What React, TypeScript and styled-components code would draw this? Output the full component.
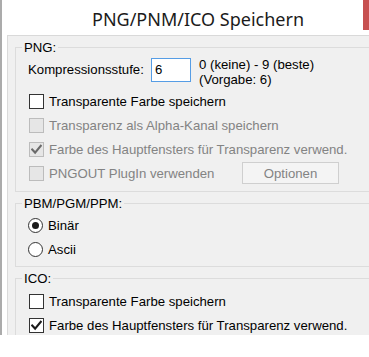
import React from "react";
import styled, { createGlobalStyle } from "styled-components";

const GlobalStyle = createGlobalStyle`
  html, body {
    margin: 0;
    padding: 0;
    background: #ffffff;
  }
  body {
    font-family: "Liberation Sans", Arial, sans-serif;
    font-size: 13.2px;
    color: #000000;
  }
`;

const Page = styled.div`
  width: 369px;
  height: 357px;
  overflow: hidden;
  background: #ffffff;
`;

const Window = styled.div`
  width: 410px;
  height: 335px;
  overflow: hidden;
  box-sizing: border-box;
  border-left: 2px solid #ababab;
  background: #ffffff;
  display: flex;
  flex-direction: column;
`;

const TitleBar = styled.div`
  height: 35px;
  flex-shrink: 0;
  display: flex;
  align-items: flex-start;
`;

const Title = styled.div`
  flex: 1;
  padding: 7px 0 0 90px;
  font-family: "Noto Sans", "Open Sans", sans-serif;
  font-size: 18px;
  line-height: 24px;
  color: #1b1b1b;
`;

const CloseButton = styled.div`
  width: 47px;
  height: 30px;
  background: #c75050;
`;

const Client = styled.div`
  flex: 1;
  margin-left: 5px;
  border-top: 1px solid #d9d9d9;
  border-left: 1px solid #dadada;
  background: #f0f0f0;
  padding: 4px 0 0 7px;
  display: flex;
  flex-direction: column;
  gap: 4px;
`;

const Group = styled.fieldset`
  margin: 0;
  padding: 0;
  min-width: 0;
  border: 1px solid #dcdcdc;
  border-right: none;
`;

const Legend = styled.legend`
  margin-left: 6px;
  padding: 0 2px;
  line-height: 15px;
`;

const GroupBody = styled.div<{ $top: number; $bottom: number }>`
  display: flex;
  flex-direction: column;
  padding: ${(p) => p.$top}px 0 ${(p) => p.$bottom}px 12px;
`;

const CompressionRow = styled.div`
  display: flex;
  align-items: flex-start;
  height: 31px;
`;

const FieldLabel = styled.span`
  width: 123px;
  line-height: 24px;
`;

const NumberBox = styled.div`
  width: 40px;
  height: 24px;
  box-sizing: border-box;
  border: 1px solid #569de5;
  background: #ffffff;
  padding-left: 3px;
  line-height: 22px;
`;

const Hint = styled.div`
  margin-left: 8px;
  margin-top: -1px;
  line-height: 15px;
`;

const Row = styled.div`
  display: flex;
  align-items: center;
  height: 24px;
`;

const Option = styled.label<{ $disabled?: boolean }>`
  display: flex;
  align-items: center;
  gap: 5px;
  line-height: 15px;
  color: ${(p) => (p.$disabled ? "#838383" : "#000000")};
`;

const CheckBox = styled.span<{ $disabled?: boolean }>`
  width: 15px;
  height: 15px;
  margin-left: 1px;
  box-sizing: border-box;
  border: 1px solid ${(p) => (p.$disabled ? "#bcbcbc" : "#333333")};
  background: ${(p) => (p.$disabled ? "#e6e6e6" : "#ffffff")};
  display: flex;
  align-items: center;
  justify-content: center;
`;

const RadioCircle = styled.span`
  width: 15px;
  height: 15px;
  box-sizing: border-box;
  border: 1px solid #333333;
  border-radius: 50%;
  background: #ffffff;
  display: flex;
  align-items: center;
  justify-content: center;
`;

const RadioDot = styled.span`
  width: 7px;
  height: 7px;
  border-radius: 50%;
  background: #1a1a1a;
`;

const PushButton = styled.div<{ $disabled?: boolean }>`
  margin-left: auto;
  margin-right: 28px;
  width: 97px;
  height: 22px;
  box-sizing: border-box;
  border: 1px solid #cfcfcf;
  background: #f4f4f4;
  color: ${(p) => (p.$disabled ? "#838383" : "#000000")};
  display: flex;
  align-items: center;
  justify-content: center;
`;

const ButtonRow = styled(Row)`
  width: 339px;
  box-sizing: border-box;
`;

function CheckMark({ color }: { color: string }) {
  return (
    <svg width="11" height="11" viewBox="0 0 11 11">
      <path d="M1.2 5.6 L4.1 8.6 L9.8 1.8" fill="none" stroke={color} strokeWidth="2.1" strokeLinecap="square" />
    </svg>
  );
}

function Check({ text, checked, disabled }: { text: string; checked?: boolean; disabled?: boolean }) {
  return (
    <Row>
      <Option $disabled={disabled}>
        <CheckBox $disabled={disabled}>{checked && <CheckMark color={disabled ? "#6a6a6a" : "#1a1a1a"} />}</CheckBox>
        {text}
      </Option>
    </Row>
  );
}

function Radio({ text, selected }: { text: string; selected?: boolean }) {
  return (
    <Row>
      <Option>
        <RadioCircle>{selected && <RadioDot />}</RadioCircle>
        {text}
      </Option>
    </Row>
  );
}

export default function App() {
  return (
    <Page>
      <GlobalStyle />
      <Window>
        <TitleBar>
          <Title>PNG/PNM/ICO Speichern</Title>
          <CloseButton />
        </TitleBar>
        <Client>
          <Group>
            <Legend>PNG:</Legend>
            <GroupBody $top={3} $bottom={6}>
              <CompressionRow>
                <FieldLabel>Kompressionsstufe:</FieldLabel>
                <NumberBox>6</NumberBox>
                <Hint>
                  0 (keine) - 9 (beste)
                  <br />
                  (Vorgabe: 6)
                </Hint>
              </CompressionRow>
              <Check text="Transparente Farbe speichern" />
              <Check text="Transparenz als Alpha-Kanal speichern" disabled />
              <Check text="Farbe des Hauptfensters für Transparenz verwend." checked disabled />
              <ButtonRow>
                <Option $disabled>
                  <CheckBox $disabled />
                  PNGOUT PlugIn verwenden
                </Option>
                <PushButton $disabled>Optionen</PushButton>
              </ButtonRow>
            </GroupBody>
          </Group>
          <Group>
            <Legend>PBM/PGM/PPM:</Legend>
            <GroupBody $top={2} $bottom={5}>
              <Radio text="Binär" selected />
              <Radio text="Ascii" />
            </GroupBody>
          </Group>
          <Group>
            <Legend>ICO:</Legend>
            <GroupBody $top={3} $bottom={6}>
              <Check text="Transparente Farbe speichern" />
              <Check text="Farbe des Hauptfensters für Transparenz verwend." checked />
            </GroupBody>
          </Group>
        </Client>
      </Window>
    </Page>
  );
}
